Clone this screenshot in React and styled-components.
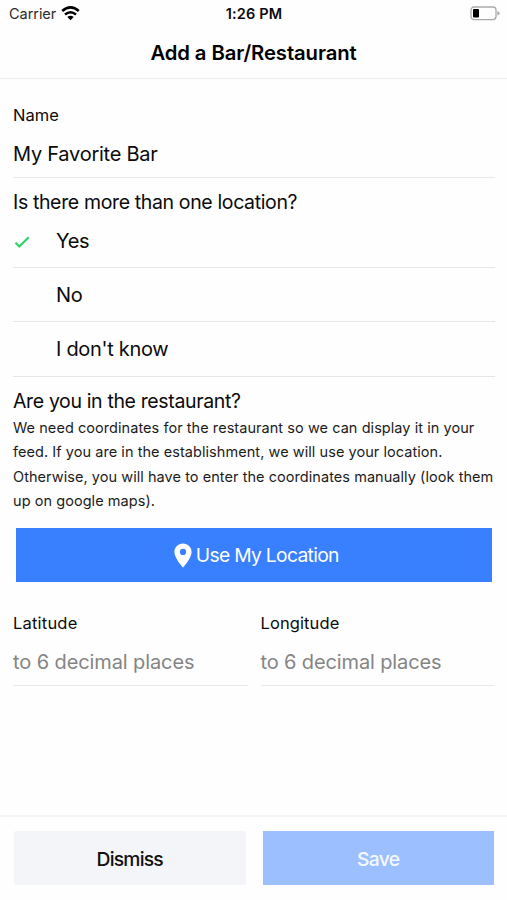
import React from 'react';
import styled, { createGlobalStyle } from 'styled-components';

const GlobalStyle = createGlobalStyle`
  * {
    box-sizing: border-box;
  }

  body {
    margin: 0;
    background: #fff;
    color: #0b0b0b;
    font-family: 'Inter', 'Liberation Sans', sans-serif;
  }
`;

const Screen = styled.div`
  display: flex;
  flex-direction: column;
  width: 507px;
  height: 900px;
  overflow: hidden;
  background: #fefefe;
`;

const Text = styled.span`
  white-space: nowrap;
  font-size: ${({ $size }) => $size || 20}px;
  font-weight: ${({ $weight }) => $weight || 400};
  letter-spacing: ${({ $spacing }) => $spacing || 0}px;
`;

const StatusBar = styled.div`
  display: grid;
  grid-template-columns: 1fr auto 1fr;
  align-items: center;
  height: 27px;
  padding: 0 7px 0 8px;
`;

const Carrier = styled.div`
  display: flex;
  align-items: center;
  gap: 5px;
  padding-left: 1px;
  color: #2b2b2b;
`;

const Battery = styled.svg`
  justify-self: end;
`;

const Header = styled.header`
  display: flex;
  justify-content: center;
  height: 52px;
  line-height: 51px;
  border-bottom: 1px solid #ececec;
  color: #000;
`;

const Form = styled.main`
  flex: 1;
  padding: 20px 12px 0 13px;
`;

const Field = styled.div`
  display: flex;
  flex: 1;
  flex-direction: column;
  border-bottom: 1px solid #e8e8e8;
`;

const Label = styled.label`
  height: 32px;
  line-height: 32px;
`;

const Value = styled.div`
  height: 46px;
  line-height: 46px;
  color: ${({ $placeholder }) => ($placeholder ? '#858585' : 'inherit')};
`;

const Question = styled.div`
  height: ${({ $height }) => $height}px;
  padding-top: 9px;
  line-height: 31px;
`;

const Option = styled.div`
  display: flex;
  align-items: center;
  height: ${({ $height }) => $height || 54.4}px;
  border-bottom: 1px solid #e6e6e6;
`;

const Mark = styled.div`
  display: flex;
  width: 43px;
  padding: 2px 0 0 1px;
`;

const Description = styled.p`
  display: flex;
  flex-direction: column;
  margin: 0;
  color: #1c1c1c;
  line-height: 24.4px;
`;

const LocationButton = styled.button`
  display: flex;
  align-items: center;
  justify-content: center;
  gap: 4px;
  width: 476.5px;
  height: 54px;
  margin: 14.2px 0 0 2.5px;
  padding: 1px 0 0 5px;
  border: 0;
  background: #3880ff;
  color: #fff;
  font-family: inherit;
`;

const Coordinates = styled.div`
  display: flex;
  gap: 13px;
  margin-top: 25px;
`;

const Footer = styled.footer`
  display: flex;
  gap: 17px;
  height: 85px;
  padding: 14px 13px 0 14px;
  border-top: 2px solid #f4f4f4;
`;

const FooterButton = styled.button`
  flex: 1;
  height: 54px;
  padding: 2px 0 0;
  border: 0;
  border-radius: ${({ $primary }) => ($primary ? 0 : 2)}px;
  background: ${({ $primary }) => ($primary ? '#9cbfff' : '#f4f5f9')};
  color: ${({ $primary }) => ($primary ? '#f5f9ff' : '#111')};
  font-family: inherit;
`;

const WifiIcon = () => (
  <svg width="19" height="15" viewBox="0 0 19 15" fill="none" stroke="#000">
    <path d="M1.2 5.1Q9.5 -2.2 17.8 5.1" strokeWidth="2.6" />
    <path d="M4 8.5Q9.5 3.8 15 8.5" strokeWidth="2.4" />
    <path d="M6.3 11.1Q9.5 8.5 12.7 11.1L9.5 14.3Z" fill="#000" stroke="none" />
  </svg>
);

const BatteryIcon = () => (
  <Battery width="31" height="15" viewBox="0 0 31 15">
    <rect x="2" y="1" width="25" height="12.6" rx="3" fill="none" stroke="#aaa" strokeWidth="1.3" />
    <rect x="4" y="3" width="6" height="8.6" rx="1" fill="#000" />
    <path d="M28.4 5Q30.6 5.8 30.6 7.3T28.4 9.6Z" fill="#aaa" />
  </Battery>
);

const CheckIcon = () => (
  <svg width="17" height="14" viewBox="0 0 17 14" fill="none">
    <path d="M1.5 7.8L5.3 11.6L14.7 2.2" stroke="#2bd469" strokeWidth="2.1" />
  </svg>
);

const PinIcon = () => (
  <svg width="18" height="25" viewBox="0 0 18 25">
    <path
      d="M9 .5C4.2.5.4 4.2.4 8.9.4 15.2 9 24.5 9 24.5S17.6 15.2 17.6 8.9C17.6 4.2 13.8.5 9 .5ZM9 12a3.1 3.1 0 1 1 0-6.2A3.1 3.1 0 0 1 9 12Z"
      fill="#fff"
    />
  </svg>
);

const options = [
  { text: 'Yes', spacing: -0.4, height: 53, checked: true },
  { text: 'No', spacing: -0.3 },
  { text: "I don't know", spacing: -0.3 },
];

const description = [
  'We need coordinates for the restaurant so we can display it in your',
  'feed. If you are in the establishment, we will use your location.',
  'Otherwise, you will have to enter the coordinates manually (look them',
  'up on google maps).',
];

const App = () => (
  <Screen>
    <GlobalStyle />
    <StatusBar>
      <Carrier>
        <Text $size={14.5} $spacing={-0.05}>Carrier</Text>
        <WifiIcon />
      </Carrier>
      <Text $size={14.5} $weight={600} $spacing={0.15}>1:26 PM</Text>
      <BatteryIcon />
    </StatusBar>
    <Header>
      <Text $size={20.3} $weight={600} $spacing={-0.1}>Add a Bar/Restaurant</Text>
    </Header>
    <Form>
      <Field>
        <Label><Text $size={16.5}>Name</Text></Label>
        <Value><Text $spacing={-0.25}>My Favorite Bar</Text></Value>
      </Field>
      <Question $height={37}>
        <Text $size={19.5} $spacing={-0.36}>Is there more than one location?</Text>
      </Question>
      {options.map(({ text, spacing, height, checked }) => (
        <Option key={text} $height={height}>
          <Mark>{checked && <CheckIcon />}</Mark>
          <Text $spacing={spacing}>{text}</Text>
        </Option>
      ))}
      <Question $height={39.2}>
        <Text $size={19.5} $spacing={-0.36}>Are you in the restaurant?</Text>
      </Question>
      <Description>
        {description.map(line => <Text key={line} $size={14.5} $spacing={0.055}>{line}</Text>)}
      </Description>
      <LocationButton>
        <PinIcon />
        <Text $size={19.3} $spacing={-0.7}>Use My Location</Text>
      </LocationButton>
      <Coordinates>
        <Field>
          <Label><Text $size={16.5} $spacing={0.2}>Latitude</Text></Label>
          <Value $placeholder><Text $spacing={-0.1}>to 6 decimal places</Text></Value>
        </Field>
        <Field>
          <Label><Text $size={16.5} $spacing={0.1}>Longitude</Text></Label>
          <Value $placeholder><Text $spacing={-0.13}>to 6 decimal places</Text></Value>
        </Field>
      </Coordinates>
    </Form>
    <Footer>
      <FooterButton><Text $size={19.3} $weight={500} $spacing={-0.8}>Dismiss</Text></FooterButton>
      <FooterButton $primary><Text $size={19.3} $weight={500} $spacing={-0.65}>Save</Text></FooterButton>
    </Footer>
  </Screen>
);

export default App;
